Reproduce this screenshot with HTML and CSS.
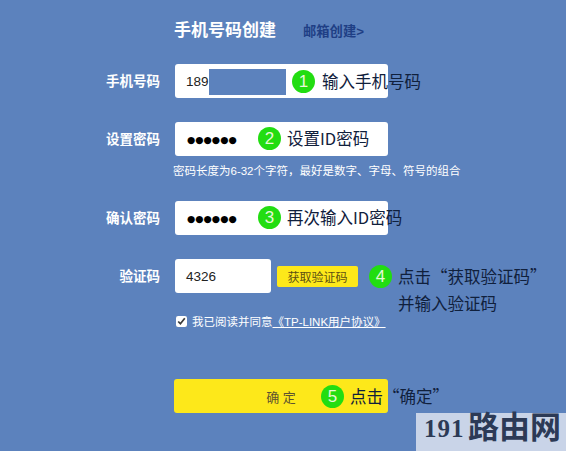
FILE: index.html
```html
<!DOCTYPE html>
<html lang="zh">
<head>
<meta charset="utf-8">
<title>手机号码创建</title>
<link rel="stylesheet" href="styles.css">
</head>
<body>
<main class="form">
  <div class="title-row">
    <h1 class="title">手机号码创建</h1>
    <a class="alt-link">邮箱创建&gt;</a>
  </div>

  <div class="row row-phone">
    <label class="label">手机号码</label>
    <div class="field"><span class="value">189</span><span class="mask"></span></div>
    <div class="note note-1"><span class="num">1</span><span>输入手机号码</span></div>
  </div>

  <div class="row row-pass">
    <label class="label">设置密码</label>
    <div class="field"><span class="dots">●●●●●●</span></div>
    <div class="note note-2"><span class="num">2</span><span>设置ID密码</span></div>
  </div>
  <p class="hint">密码长度为6-32个字符，最好是数字、字母、符号的组合</p>

  <div class="row row-confirm">
    <label class="label">确认密码</label>
    <div class="field"><span class="dots">●●●●●●</span></div>
    <div class="note note-2"><span class="num">3</span><span>再次输入ID密码</span></div>
  </div>

  <div class="row row-code">
    <label class="label">验证码</label>
    <div class="field field-code"><span class="value">4326</span></div>
    <button class="get-code">获取验证码</button>
    <div class="note note-4"><span class="num">4</span><span class="note-text">点击“获取验证码”<br>并输入验证码</span></div>
  </div>

  <div class="agree">
    <input class="check" type="checkbox" checked>
    <span>我已阅读并同意</span><a class="agree-link">《TP-LINK用户协议》</a>
  </div>

  <div class="row row-submit">
    <button class="submit">确 定</button>
    <div class="note note-5"><span class="num">5</span><span>点击“确定”</span></div>
  </div>
</main>
<div class="mark"><span class="mark-num">191</span>路由网</div>
</body>
</html>
```
FILE: styles.css
```css
* { box-sizing: border-box; }
html, body { margin: 0; height: 451px; overflow: hidden; }
body {
  position: relative;
  width: 566px;
  background: #5c82bd;
  font-family: "Liberation Sans", "Noto Sans CJK SC", sans-serif;
  color: #fff;
}
.form { padding: 18px 0 0 174px; }
.title-row { display: flex; align-items: center; height: 26px; }
.title { margin: 0; font-size: 17px; font-weight: 700; line-height: 26px; color: #fff; }
.alt-link { margin: 0 0 2px 27px; font-size: 13.3px; font-weight: 700; color: #1f3f85; }
.row { position: relative; display: flex; align-items: center; height: 34px; }
.row-phone { margin-top: 20px; }
.row-pass { margin-top: 24px; }
.row-confirm { margin-top: 24px; }
.row-code { margin-top: 24px; }
.row-submit { margin-top: 51px; }
.label {
  position: absolute;
  right: 100%;
  margin: 0 14px 3px 0;
  white-space: nowrap;
  font-size: 13.5px;
  font-weight: 700;
  color: #fff;
}
.field {
  display: flex;
  align-items: center;
  width: 213px;
  height: 34px;
  margin-left: 1px;
  padding-left: 11px;
  background: #fff;
  border-radius: 3px;
  color: #222;
}
.field-code { width: 96px; }
.value { font-size: 13.5px; }
.mask { width: 77px; height: 26px; margin-top: 1px; background: #5c82bd; }
.dots { margin-left: 1px; font-size: 9.5px; color: #000; font-family: "DejaVu Sans", sans-serif; }
.hint { margin: 9px 0 0 -1px; height: 12px; font-size: 11.5px; line-height: 12px; color: #fff; white-space: nowrap; }
.get-code {
  width: 81px;
  height: 21px;
  margin-left: 6px;
  padding: 0;
  border: 0;
  border-radius: 2px;
  background: #fde81a;
  color: #5e5012;
  font: 12px "Liberation Sans", "Noto Sans CJK SC", sans-serif;
}
.note {
  position: absolute;
  display: flex;
  align-items: center;
  gap: 6px;
  font-family: "Noto Sans CJK SC", sans-serif;
  font-size: 16.5px;
  line-height: 27px;
  color: #10203c;
  white-space: nowrap;
}
.num {
  flex: none;
  width: 23px;
  height: 23px;
  border-radius: 50%;
  background: #22dd11;
  color: #e8f8d8;
  font-family: "Liberation Sans", sans-serif;
  font-size: 17px;
  line-height: 23px;
  text-align: center;
}
.note-1 { left: 118px; top: 4px; gap: 7px; }
.note-2 { left: 84px; top: 3px; }
.note-4 { left: 195px; top: 4px; align-items: flex-start; gap: 6px; }
.note-4 .num { margin-top: 2px; }
.note-5 { left: 147px; top: 4px; }
.agree {
  display: flex;
  align-items: center;
  height: 14px;
  margin-top: 21px;
  font-size: 11.5px;
  white-space: nowrap;
}
.check { width: 11px; height: 11px; margin: 0 5px 0 2px; accent-color: #fff; }
.agree-link { color: #fff; text-decoration: underline; }
.submit {
  width: 214px;
  height: 34px;
  padding: 0;
  border: 0;
  border-radius: 3px;
  background: #fde81a;
  color: #5d5330;
  font: 13px "Liberation Sans", "Noto Sans CJK SC", sans-serif;
}
.mark {
  position: absolute;
  right: 0;
  bottom: 0;
  display: flex;
  align-items: center;
  width: 150px;
  height: 38px;
  padding: 0 0 8px 8px;
  background: #c9d4e8;
  color: #2c3a56;
  font-size: 31px;
  font-weight: 700;
  line-height: 32px;
  white-space: nowrap;
}
.mark-num { width: 44px; padding-top: 2px; font-family: "Liberation Serif", serif; font-size: 25px; font-weight: 700; letter-spacing: 1px; }
```
